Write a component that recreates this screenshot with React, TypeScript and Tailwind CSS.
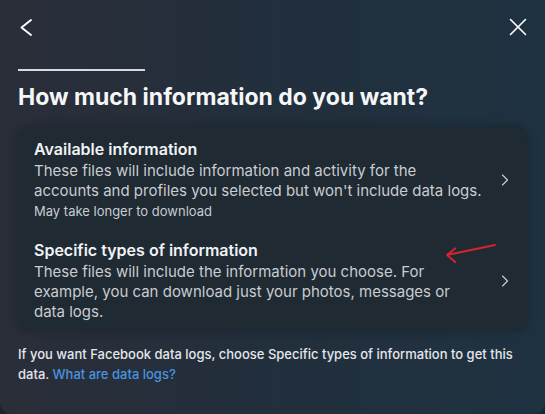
import { ChevronRight, X } from 'lucide-react';

const OPTIONS = [
  {
    title: 'Available information',
    lines: [
      'These files will include information and activity for the',
      "accounts and profiles you selected but won't include data logs.",
    ],
    note: 'May take longer to download',
  },
  {
    title: 'Specific types of information',
    lines: [
      'These files will include the information you choose. For',
      'example, you can download just your photos, messages or',
      'data logs.',
    ],
    note: null,
  },
];

function OptionRow({
  title,
  lines,
  note,
}: {
  title: string;
  lines: string[];
  note: string | null;
}) {
  return (
    <div className="flex items-center gap-[4px] pr-[13px] pl-[17px]">
      <div className="min-w-0 flex-1">
        <p className="mb-[1px] text-[16px] leading-[22px] font-semibold text-[#f0f2f5]">
          {title}
        </p>
        <p className="text-[15px] leading-[20px] text-[#c9ccd1]">
          {lines.map((line) => (
            <span key={line} className="block whitespace-nowrap">
              {line}
            </span>
          ))}
        </p>
        {note && (
          <p className="text-[13px] leading-[20px] text-[#c9ccd1]">{note}</p>
        )}
      </div>
      <ChevronRight className="size-[20px] shrink-0 text-[#c9ccd1]" strokeWidth={1.4} />
    </div>
  );
}

export default function App() {
  return (
    <div className="h-[414px] w-[545px] bg-[#1a2530] font-['Inter',sans-serif]">
      <div className="flex h-full flex-col rounded-b-[12px] bg-linear-to-r from-[#2a2e39] via-[#222f3c] to-[#1f3241]">
        <div className="flex items-center justify-between pt-[12px] pr-[12px] pl-[16px]">
          <svg width="20" height="30" viewBox="0 0 20 30" fill="none">
            <path
              d="M15 8 L5.5 15.5 L15 23"
              stroke="white"
              strokeWidth="1.9"
              strokeLinecap="round"
              strokeLinejoin="round"
            />
          </svg>
          <X className="size-[30px] text-white" strokeWidth={1.3} />
        </div>

        <div className="mt-[27px] ml-[18px] h-[2px] w-[127px] bg-[#d8dade]" />

        <h1 className="mt-[11px] px-[18px] text-[23px] leading-[30px] font-bold text-[#f5f6f7]">
          How much information do you want?
        </h1>

        <div className="relative mx-[17px] mt-[15px] flex flex-col gap-[18px] rounded-[12px] bg-[#1f2a33] pt-[11px] pb-[8px] shadow-[0_0_12px_rgba(0,0,0,0.25)]">
          <OptionRow {...OPTIONS[0]} />
          <OptionRow {...OPTIONS[1]} />
          <svg
            className="absolute top-[108px] left-[420px]"
            width="80"
            height="30"
            viewBox="0 0 80 30"
            fill="none"
          >
            <path
              d="M58 10 L10 20 M10 20 L18.4 13.2 M10 20 L18.4 27.2"
              stroke="#d8232f"
              strokeWidth="1.8"
              strokeLinecap="round"
            />
          </svg>
        </div>

        <p className="mt-[14px] px-[18px] text-[13px] leading-[20px] font-medium text-[#e4e6eb]">
          If you want Facebook data logs, choose Specific types of information
          to get this data.{' '}
          <span className="text-[#4a93e0]">What are data logs?</span>
        </p>
      </div>
    </div>
  );
}
